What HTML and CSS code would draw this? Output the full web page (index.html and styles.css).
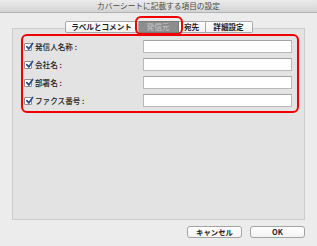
FILE: index.html
```html
<!DOCTYPE html>
<html lang="ja">

<head>
    <meta charset="UTF-8">
    <title>カバーシートに記載する項目の設定</title>
    <link rel="stylesheet" href="styles.css">
</head>

<body>
    <div class="window">
        <div class="titlebar">カバーシートに記載する項目の設定</div>

        <div class="main">
            <div class="tabs">
                <span class="tab tab-label">ラベルとコメント</span>
                <span class="tab tab-sender selected">発信元</span>
                <span class="tab tab-dest">宛先</span>
                <span class="tab tab-detail">詳細設定</span>
            </div>

            <div class="panel">
                <div class="group">
                    <div class="row">
                        <label class="check"><span class="box"><svg viewBox="0 0 9 9"><path d="M1.8 4.6 L3.8 7 L7.6 1.4" /></svg></span>発信人名称 :</label>
                        <span class="field"></span>
                    </div>
                    <div class="row">
                        <label class="check"><span class="box"><svg viewBox="0 0 9 9"><path d="M1.8 4.6 L3.8 7 L7.6 1.4" /></svg></span>会社名 :</label>
                        <span class="field"></span>
                    </div>
                    <div class="row">
                        <label class="check"><span class="box"><svg viewBox="0 0 9 9"><path d="M1.8 4.6 L3.8 7 L7.6 1.4" /></svg></span>部署名 :</label>
                        <span class="field"></span>
                    </div>
                    <div class="row">
                        <label class="check"><span class="box"><svg viewBox="0 0 9 9"><path d="M1.8 4.6 L3.8 7 L7.6 1.4" /></svg></span>ファクス番号 :</label>
                        <span class="field"></span>
                    </div>
                </div>
            </div>

            <div class="buttons">
                <button class="btn">キャンセル</button>
                <button class="btn">OK</button>
            </div>
        </div>
    </div>
</body>

</html>
```

FILE: styles.css
```css
:root {
    --BodyFont: "Noto Sans CJK JP", "Liberation Sans", sans-serif;
    --Mark: #f00000;
}

body {
    margin: 0;
    padding: 0;
    font-family: var(--BodyFont);
    background-color: #ececec;
}

.window {
    width: 317px;
    height: 246px;
    background-color: #ececec;
    overflow: hidden;
}

.titlebar {
    height: 12px;
    line-height: 12px;
    text-align: center;
    font-size: 7.7px;
    color: #4a4a4a;
    background: linear-gradient(#ebebeb, #d4d4d4);
    border-bottom: 1px solid #b2b2b2;
}

.main {
    padding: 0 12px;
}

.tabs {
    display: flex;
    justify-content: center;
    margin-top: 8px;
    margin-bottom: -5px;
    position: relative;
    z-index: 1;
}

.tab {
    height: 10px;
    line-height: 10px;
    font-size: 7.6px;
    font-weight: 700;
    color: #1e1e1e;
    text-align: center;
    background: linear-gradient(#ffffff, #f1f1f1);
    border: 1px solid #a8a8a8;
    border-left: none;
}

.tab-label {
    width: 72px;
    border-left: 1px solid #a8a8a8;
    border-radius: 2px 0 0 2px;
}

.tab-sender {
    width: 39px;
}

.tab-dest {
    width: 26px;
}

.tab-detail {
    width: 46px;
    border-radius: 0 2px 2px 0;
}

.tab.selected {
    position: relative;
    background: #8d8d8d;
    color: #b9b9b9;
    border-color: #7a7a7a;
}

.tab.selected::after {
    content: "";
    position: absolute;
    left: -4px;
    right: -5px;
    top: -6px;
    bottom: -3px;
    border: 2px solid var(--Mark);
    border-radius: 6px;
}

.panel {
    height: 185px;
    padding: 5px 5px 0 8px;
    background-color: #e3e3e3;
    border: 1px solid #cbcbcb;
    box-sizing: content-box;
}

.group {
    display: flex;
    flex-direction: column;
    gap: 5px;
    padding: 4px 5px 4px 1px;
    border: 2px solid var(--Mark);
    border-radius: 6px;
}

.row {
    display: flex;
    align-items: center;
    height: 13px;
}

.check {
    display: flex;
    align-items: center;
    gap: 3px;
    width: 119px;
    font-size: 7.6px;
    font-weight: 500;
    color: #222;
}

.box {
    display: block;
    width: 8px;
    height: 8px;
    background-color: #fff;
    border: 1px solid #8e8e8e;
    border-radius: 1px;
    box-sizing: border-box;
    overflow: visible;
}

.box svg {
    display: block;
    width: 9px;
    height: 9px;
    margin: -1.5px 0 0 -0.5px;
    fill: none;
    stroke: #2a4f8f;
    stroke-width: 1.7;
    stroke-linecap: round;
    stroke-linejoin: round;
}

.field {
    display: block;
    width: 150px;
    height: 13px;
    background-color: #fff;
    border: 1px solid #b9b9b9;
    border-top-color: #a3a3a3;
    box-sizing: border-box;
}

.buttons {
    display: flex;
    justify-content: flex-end;
    gap: 8px;
    margin-top: 6px;
}

.btn {
    width: 55px;
    height: 12px;
    padding: 0;
    font-family: var(--BodyFont);
    font-size: 7.4px;
    font-weight: 700;
    line-height: 10px;
    color: #222;
    background: linear-gradient(#ffffff, #f3f3f3);
    border: 1px solid #a3a3a3;
    border-radius: 3px;
}
```
